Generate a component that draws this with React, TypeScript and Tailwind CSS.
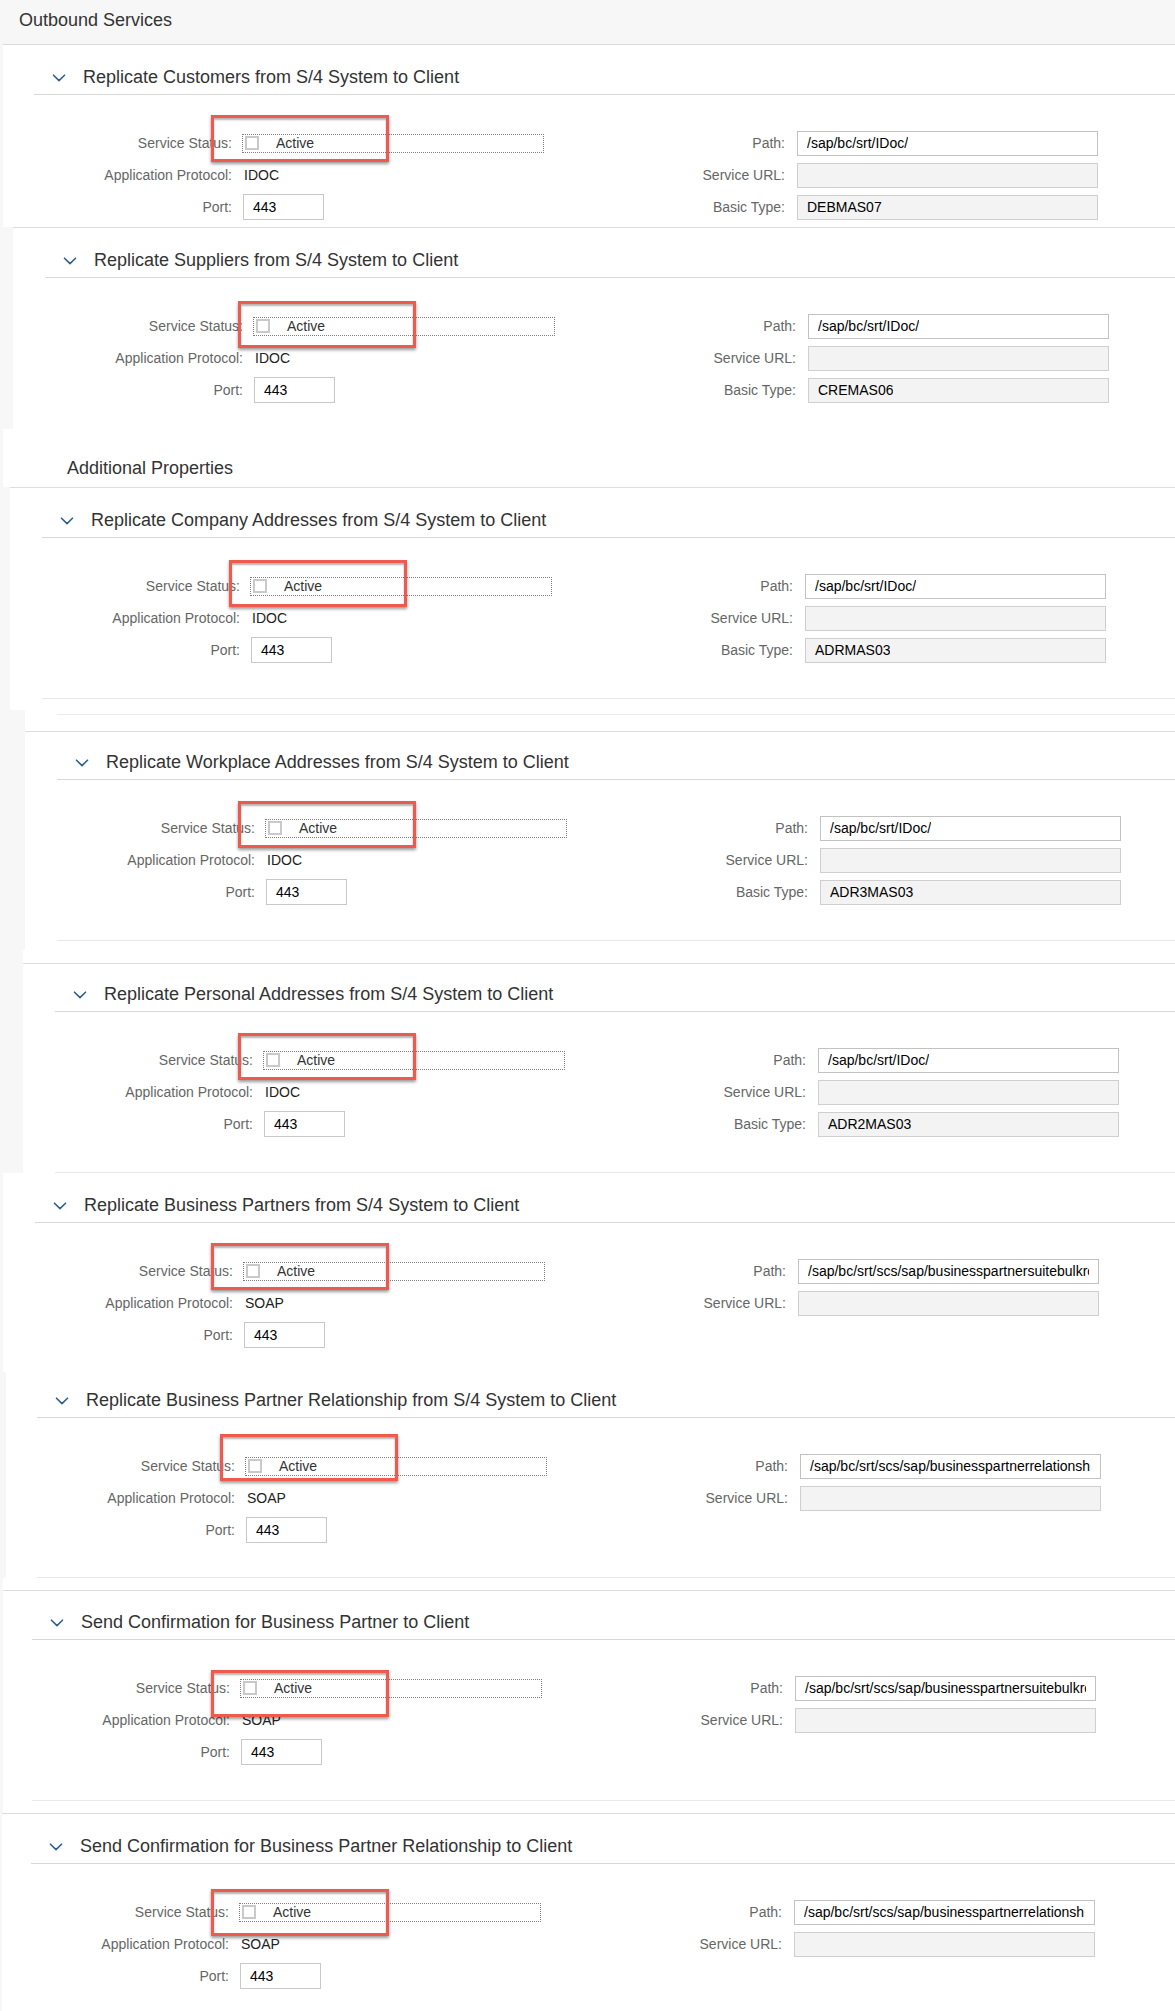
import React from 'react';

type Sec = {
  title: string;
  protocol: string;
  path: string;
  basic?: string;
  outer: string;
  inner: string;
  red: string;
  lead?: React.ReactNode;
  bottom?: string;
};

const Line = ({ className = '' }: { className?: string }) => (
  <div className={`h-px bg-[#dedede] ${className}`} />
);

const SECTIONS: Sec[] = [
  {
    title: 'Replicate Customers from S/4 System to Client',
    protocol: 'IDOC',
    path: '/sap/bc/srt/IDoc/',
    basic: 'DEBMAS07',
    outer: 'ml-[3px] h-[182px]',
    inner: 'ml-[31px] pt-[16px]',
    red: 'left-[-32px] top-[-20px]',
  },
  {
    title: 'Replicate Suppliers from S/4 System to Client',
    protocol: 'IDOC',
    path: '/sap/bc/srt/IDoc/',
    basic: 'CREMAS06',
    outer: 'ml-[13px] h-[202px] border-t border-[#dedede]',
    inner: 'ml-[32px] pt-[16px]',
    red: 'left-[-16px] top-[-17px]',
  },
];

const SECTIONS_B: Sec[] = [
  {
    title: 'Replicate Company Addresses from S/4 System to Client',
    protocol: 'IDOC',
    path: '/sap/bc/srt/IDoc/',
    basic: 'ADRMAS03',
    outer: 'ml-[10px] h-[223px] border-t border-[#dedede]',
    inner: 'ml-[32px] pt-[16px]',
    red: 'left-[-22px] top-[-18px]',
    bottom: 'mt-[32px]',
  },
  {
    title: 'Replicate Workplace Addresses from S/4 System to Client',
    protocol: 'IDOC',
    path: '/sap/bc/srt/IDoc/',
    basic: 'ADR3MAS03',
    outer: 'ml-[25px] h-[240px]',
    inner: 'ml-[32px] pt-[14px]',
    red: 'left-[-28px] top-[-19px]',
    lead: (
      <>
        <div className="h-[4px]" />
        <Line className="ml-[32px] bg-[#ececec]" />
        <div className="h-[16px]" />
        <Line />
      </>
    ),
    bottom: 'mt-[32px]',
  },
  {
    title: 'Replicate Personal Addresses from S/4 System to Client',
    protocol: 'IDOC',
    path: '/sap/bc/srt/IDoc/',
    basic: 'ADR2MAS03',
    outer: 'ml-[23px] h-[223px]',
    inner: 'ml-[32px] pt-[14px]',
    red: 'left-[-26px] top-[-19px]',
    lead: (
      <>
        <div className="h-[13px]" />
        <Line />
      </>
    ),
    bottom: 'mt-[32px]',
  },
  {
    title: 'Replicate Business Partners from S/4 System to Client',
    protocol: 'SOAP',
    path: '/sap/bc/srt/scs/sap/businesspartnersuitebulkreplicateconf',
    outer: 'ml-[3px] h-[199px]',
    inner: 'ml-[32px] pt-[16px]',
    red: 'left-[-33px] top-[-20px]',
  },
  {
    title: 'Replicate Business Partner Relationship from S/4 System to Client',
    protocol: 'SOAP',
    path: '/sap/bc/srt/scs/sap/businesspartnerrelationshipsuitebulkreplicate',
    outer: 'ml-[6px] h-[206px]',
    inner: 'ml-[31px] pt-[12px]',
    red: 'left-[-26px] top-[-24px]',
    bottom: 'mt-[31px]',
  },
  {
    title: 'Send Confirmation for Business Partner to Client',
    protocol: 'SOAP',
    path: '/sap/bc/srt/scs/sap/businesspartnersuitebulkreplicateconf',
    outer: 'ml-[3px] h-[235px]',
    inner: 'ml-[29px] pt-[15px]',
    red: 'left-[-30px] top-[-10px]',
    lead: (
      <>
        <div className="h-[12px]" />
        <Line />
      </>
    ),
    bottom: 'mt-[32px]',
  },
  {
    title: 'Send Confirmation for Business Partner Relationship to Client',
    protocol: 'SOAP',
    path: '/sap/bc/srt/scs/sap/businesspartnerrelationshipsuitebulkreplicate',
    outer: 'ml-[2px] h-[198px] border-t border-[#dedede]',
    inner: 'ml-[29px] pt-[16px]',
    red: 'left-[-29px] top-[-15px]',
  },
];

function Chevron() {
  return (
    <svg viewBox="0 0 14 8" className="ml-[18px] h-[8px] w-[14px]" fill="none" stroke="#2f5f8c" strokeWidth={1.6} strokeLinecap="round" strokeLinejoin="round">
      <path d="M1.5 1.2 7 6.6l5.5-5.4" />
    </svg>
  );
}

function Label({ children }: { children: React.ReactNode }) {
  return <div className="w-[198px] shrink-0 text-right text-[14px] text-[#666]">{children}</div>;
}

function RightField({ label, value, disabled }: { label: string; value?: string; disabled?: boolean }) {
  return (
    <div className="flex items-center">
      <div className="w-[85px] shrink-0 text-right text-[14px] text-[#666]">{label}</div>
      <div
        className={`ml-[12px] flex h-[25px] w-[301px] items-center border px-[9px] text-[14px] text-black ${
          disabled ? 'border-[#cfcfcf] bg-[#f3f3f3]' : 'border-[#c2c2c2] bg-white'
        }`}
      >
        <div className="overflow-hidden whitespace-nowrap">{value}</div>
      </div>
    </div>
  );
}

function Section({ s }: { s: Sec }) {
  return (
    <div className={`bg-white ${s.outer}`}>
      {s.lead}
      <div className={s.inner}>
        <div className="flex h-[34px] items-center border-b border-[#d8d8d8]">
          <Chevron />
          <span className="ml-[17px] text-[18px] text-[#333]">{s.title}</span>
        </div>

        <div className="pt-[32px]">
          <div className="flex h-[32px] items-center">
            <div className="flex w-[666px] items-center">
              <Label>Service Status:</Label>
              <div className="relative ml-[10px] flex h-[19px] w-[302px] items-center border border-dotted border-[#7d7d7d]">
                <div className="ml-[2px] h-[14px] w-[14px] border-2 border-[#c9c9c9] bg-white" />
                <span className="ml-[17px] text-[14px] text-[#333]">Active</span>
                <div
                  className={`absolute z-10 h-[47px] w-[178px] border-[3px] border-[#ef5a4e] shadow-[0_2px_3px_rgba(0,0,0,0.4),inset_0_2px_2px_rgba(0,0,0,0.3)] ${s.red}`}
                />
              </div>
            </div>
            <RightField label="Path:" value={s.path} />
          </div>

          <div className="flex h-[32px] items-center">
            <div className="flex w-[666px] items-center">
              <Label>Application Protocol:</Label>
              <span className="ml-[12px] text-[14px] text-[#222]">{s.protocol}</span>
            </div>
            <RightField label="Service URL:" disabled />
          </div>

          <div className="flex h-[32px] items-center">
            <div className="flex w-[666px] items-center">
              <Label>Port:</Label>
              <div className="ml-[11px] flex h-[26px] w-[81px] items-center border border-[#c8c8c8] bg-white pl-[9px] text-[14px] text-black">
                443
              </div>
            </div>
            {s.basic && <RightField label="Basic Type:" value={s.basic} disabled />}
          </div>
        </div>

        {s.bottom && <Line className={`${s.bottom} bg-[#e8e8e8]`} />}
      </div>
    </div>
  );
}

export default function App() {
  return (
    <div className="w-[1175px] h-[2011px] overflow-hidden bg-[#f7f7f7] font-[Liberation_Sans,Arial,sans-serif]">
      {/* ── Outbound header ─────────────────────────────── */}
      <div className="flex h-[45px] items-start border-b border-[#d9d9d9] bg-[#f7f7f7] pl-[19px] pt-[9px] ml-[3px]">
        <span className="ml-[-3px] text-[18px] leading-[22px] text-[#333]">Outbound Services</span>
      </div>

      {SECTIONS.map((s) => (
        <Section key={s.title} s={s} />
      ))}

      {/* ── Additional properties ───────────────────────── */}
      <div className="ml-[3px] h-[58px] bg-white pl-[64px] pt-[28px]">
        <span className="text-[18px] leading-[22px] text-[#333]">Additional Properties</span>
      </div>

      {SECTIONS_B.map((s) => (
        <Section key={s.title} s={s} />
      ))}
    </div>
  );
}
